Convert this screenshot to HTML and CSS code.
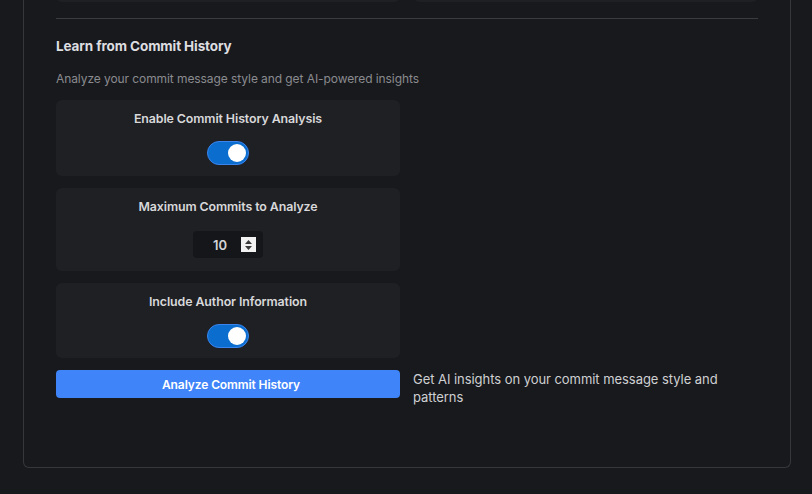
FILE: index.html
```html
<!DOCTYPE html>
<html lang="en">
<head>
<meta charset="utf-8">
<title>Learn from Commit History</title>
<link rel="stylesheet" href="styles.css">
</head>
<body>
<div class="panel">
  <div class="top-cards">
    <div class="card stub"></div>
    <div class="card stub"></div>
  </div>
  <hr class="divider">
  <h3 class="heading">Learn from Commit History</h3>
  <p class="subtitle">Analyze your commit message style and get AI-powered insights</p>
  <div class="grid">
    <div class="card setting">
      <div class="label">Enable Commit History Analysis</div>
      <div class="toggle"><span class="knob"></span></div>
    </div>
    <div></div>
    <div class="card setting tall">
      <div class="label">Maximum Commits to Analyze</div>
      <div class="number">
        <span class="value">10</span>
        <span class="spin">
          <svg width="9" height="12" viewBox="0 0 9 12"><path d="M4.5 1 L8 5 H1 Z M4.5 11 L8 7 H1 Z" fill="#3a3a3a"/></svg>
        </span>
      </div>
    </div>
    <div></div>
    <div class="card setting last">
      <div class="label">Include Author Information</div>
      <div class="toggle"><span class="knob"></span></div>
    </div>
    <div></div>
    <button class="analyze">Analyze Commit History</button>
    <p class="hint">Get AI insights on your commit message style and patterns</p>
  </div>
</div>
</body>
</html>
```
FILE: styles.css
```css
html, body {
  margin: 0;
  padding: 0;
  background: #18191d;
}
body {
  font-family: Inter, "Liberation Sans", Arial, sans-serif;
  color: #dcdcde;
  padding: 0 21px 0 23px;
  height: 494px;
  overflow: hidden;
}
.panel {
  border: 1px solid #36373b;
  border-top: none;
  border-radius: 0 0 6px 6px;
  padding: 0 32px 61px 32px;
  margin-top: -20px;
}
.top-cards {
  display: grid;
  grid-template-columns: 1fr 1fr;
  gap: 14px;
}
.card {
  background: #1f2024;
  border-radius: 6px;
}
.stub {
  height: 22px;
}
.divider {
  border: none;
  border-top: 1px solid #3b3c40;
  margin: 16px 0 0 0;
}
.heading {
  margin: 19px 0 0 0;
  font-size: 13.5px;
  line-height: 16px;
  font-weight: 700;
  color: #dedee0;
  letter-spacing: -0.1px;
}
.subtitle {
  margin: 17px 0 0 0;
  font-size: 12px;
  line-height: 16px;
  color: #8a8b8f;
  letter-spacing: -0.08px;
}
.grid {
  margin-top: 13px;
  display: grid;
  grid-template-columns: 344px 1fr;
  column-gap: 13px;
  row-gap: 12px;
}
.setting {
  display: flex;
  flex-direction: column;
  align-items: center;
  padding: 10px 16px 11px;
}
.last {
  padding-bottom: 10px;
}
.label {
  font-size: 12.4px;
  line-height: 18px;
  font-weight: 600;
  color: #d8d8da;
  margin-bottom: 13px;
  letter-spacing: -0.1px;
}
.tall .label {
  margin-bottom: 15px;
}
.tall {
  padding-bottom: 13px;
}
.toggle {
  width: 42px;
  height: 24px;
  box-sizing: border-box;
  border-radius: 12px;
  background: #0b6ecf;
  border: 1px solid #3a84ee;
  display: flex;
  align-items: center;
  justify-content: flex-end;
  padding-right: 2px;
}
.knob {
  width: 18px;
  height: 18px;
  border-radius: 50%;
  background: #ffffff;
}
.number {
  width: 70px;
  height: 27px;
  box-sizing: border-box;
  background: #151619;
  border-radius: 4px;
  display: flex;
  align-items: center;
  padding-left: 20px;
  gap: 14px;
}
.value {
  font-size: 13px;
  font-weight: 600;
  color: #d4d4d6;
}
.spin {
  width: 15px;
  height: 15px;
  background: #f2f2f2;
  display: flex;
  align-items: center;
  justify-content: center;
}
.analyze {
  align-self: start;
  height: 28px;
  border: none;
  border-radius: 4px;
  background: #3f84f8;
  color: #ffffff;
  font-family: inherit;
  font-size: 12px;
  font-weight: 600;
  letter-spacing: -0.1px;
  padding: 0 0 0 6px;
}
.hint {
  margin: 0;
  font-size: 13px;
  line-height: 18px;
  color: #cfd0d2;
  letter-spacing: -0.05px;
}
```
